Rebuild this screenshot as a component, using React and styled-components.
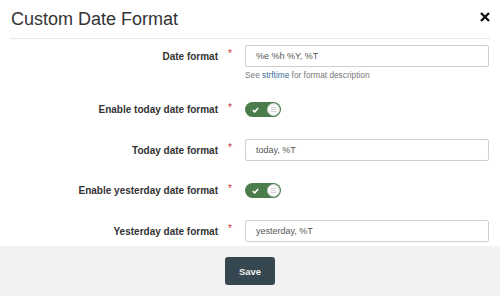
import React from 'react';
import styled, { createGlobalStyle } from 'styled-components';

const GlobalStyle = createGlobalStyle`
  html, body {
    margin: 0;
    padding: 0;
    background: #fff;
    font-family: "Liberation Sans", Arial, sans-serif;
    color: #333;
  }
`;

const Modal = styled.div`
  width: 500px;
  height: 296px;
  display: flex;
  flex-direction: column;
  overflow: hidden;
`;

const Header = styled.div`
  height: 39px;
  margin: 0 10px;
  display: flex;
  align-items: center;
  justify-content: space-between;
  border-bottom: 1px solid #e6e6e6;
  box-sizing: border-box;
`;

const Title = styled.h4`
  margin: 0;
  padding-left: 1px;
  font-size: 18px;
  font-weight: normal;
  color: #333;
`;

const Close = styled.button`
  border: 0;
  padding: 0;
  background: none;
  width: 10px;
  height: 10px;
  margin-bottom: 5px;
  display: flex;
  cursor: pointer;
`;

const Body = styled.div`
  flex: 1;
  padding: 6px 11px 4px 0;
  display: flex;
  flex-direction: column;
  gap: 18.5px;
`;

const Row = styled.div`
  display: grid;
  grid-template-columns: 218px 27px 244px;
  align-items: center;
  min-height: 22px;
`;

const Label = styled.label`
  text-align: right;
  font-size: 10px;
  font-weight: bold;
  color: #333;
`;

const Required = styled.span`
  padding-left: 10px;
  margin-bottom: 5px;
  font-size: 10px;
  color: #c9302c;
`;

const Input = styled.input`
  box-sizing: border-box;
  width: 100%;
  height: 22px;
  margin: 0;
  padding: 0 10px;
  border: 1px solid #cfcfcf;
  border-radius: 2px;
  font-family: "Liberation Sans", Arial, sans-serif;
  font-size: 9px;
  color: #555;
  outline: none;
`;

const Help = styled.div`
  grid-column: 3;
  margin-top: 3px;
  font-size: 8.3px;
  line-height: 10px;
  color: #777;

  a {
    color: #3b6f9e;
    text-decoration: none;
  }
`;

const Toggle = styled.span`
  box-sizing: border-box;
  width: 36px;
  height: 15px;
  border-radius: 8px;
  background: #4b7d4c;
  display: flex;
  align-items: center;
  justify-content: space-between;
  padding: 0 1px 0 7px;
`;

const Knob = styled.span`
  box-sizing: border-box;
  width: 13px;
  height: 13px;
  border-radius: 50%;
  background: #fafafa;
  border: 1px solid #d8d8d8;
  display: flex;
  flex-direction: column;
  align-items: center;
  justify-content: center;
  gap: 1px;

  i {
    display: block;
    width: 5px;
    height: 1px;
    background: #d4d4d4;
  }
`;

const Footer = styled.div`
  height: 50px;
  background: #f2f2f2;
  display: flex;
  justify-content: center;
  align-items: flex-start;
  padding-top: 11px;
  box-sizing: border-box;
`;

const SaveButton = styled.button`
  width: 50px;
  height: 28px;
  border: 0;
  border-radius: 3px;
  background: #36474f;
  color: #eef0f1;
  font-family: "Liberation Sans", Arial, sans-serif;
  font-size: 9.5px;
  font-weight: bold;
  cursor: pointer;
`;

const Switch = () => (
  <Toggle>
    <svg width="7" height="6" viewBox="0 0 7 6">
      <path d="M0.8 3.1 L2.7 4.9 L6.2 1" fill="none" stroke="#fff" strokeWidth="1.6" />
    </svg>
    <Knob>
      <i />
      <i />
      <i />
    </Knob>
  </Toggle>
);

const fields = [
  { label: 'Date format', value: '%e %h %Y, %T', help: true },
  { label: 'Enable today date format', toggle: true },
  { label: 'Today date format', value: 'today, %T' },
  { label: 'Enable yesterday date format', toggle: true },
  { label: 'Yesterday date format', value: 'yesterday, %T' },
];

export default function App() {
  return (
    <>
      <GlobalStyle />
      <Modal>
        <Header>
          <Title>Custom Date Format</Title>
          <Close aria-label="Close">
            <svg width="10" height="10" viewBox="0 0 10 10">
              <path d="M1 1 L9 9 M9 1 L1 9" stroke="#111" strokeWidth="2.4" />
            </svg>
          </Close>
        </Header>
        <Body>
          {fields.map((f) => (
            <Row key={f.label}>
              <Label>{f.label}</Label>
              <Required>*</Required>
              {f.toggle ? (
                <Switch />
              ) : (
                <Input defaultValue={f.value} readOnly />
              )}
              {f.help && (
                <Help>
                  See <a href="#">strftime</a> for format description
                </Help>
              )}
            </Row>
          ))}
        </Body>
        <Footer>
          <SaveButton>Save</SaveButton>
        </Footer>
      </Modal>
    </>
  );
}
